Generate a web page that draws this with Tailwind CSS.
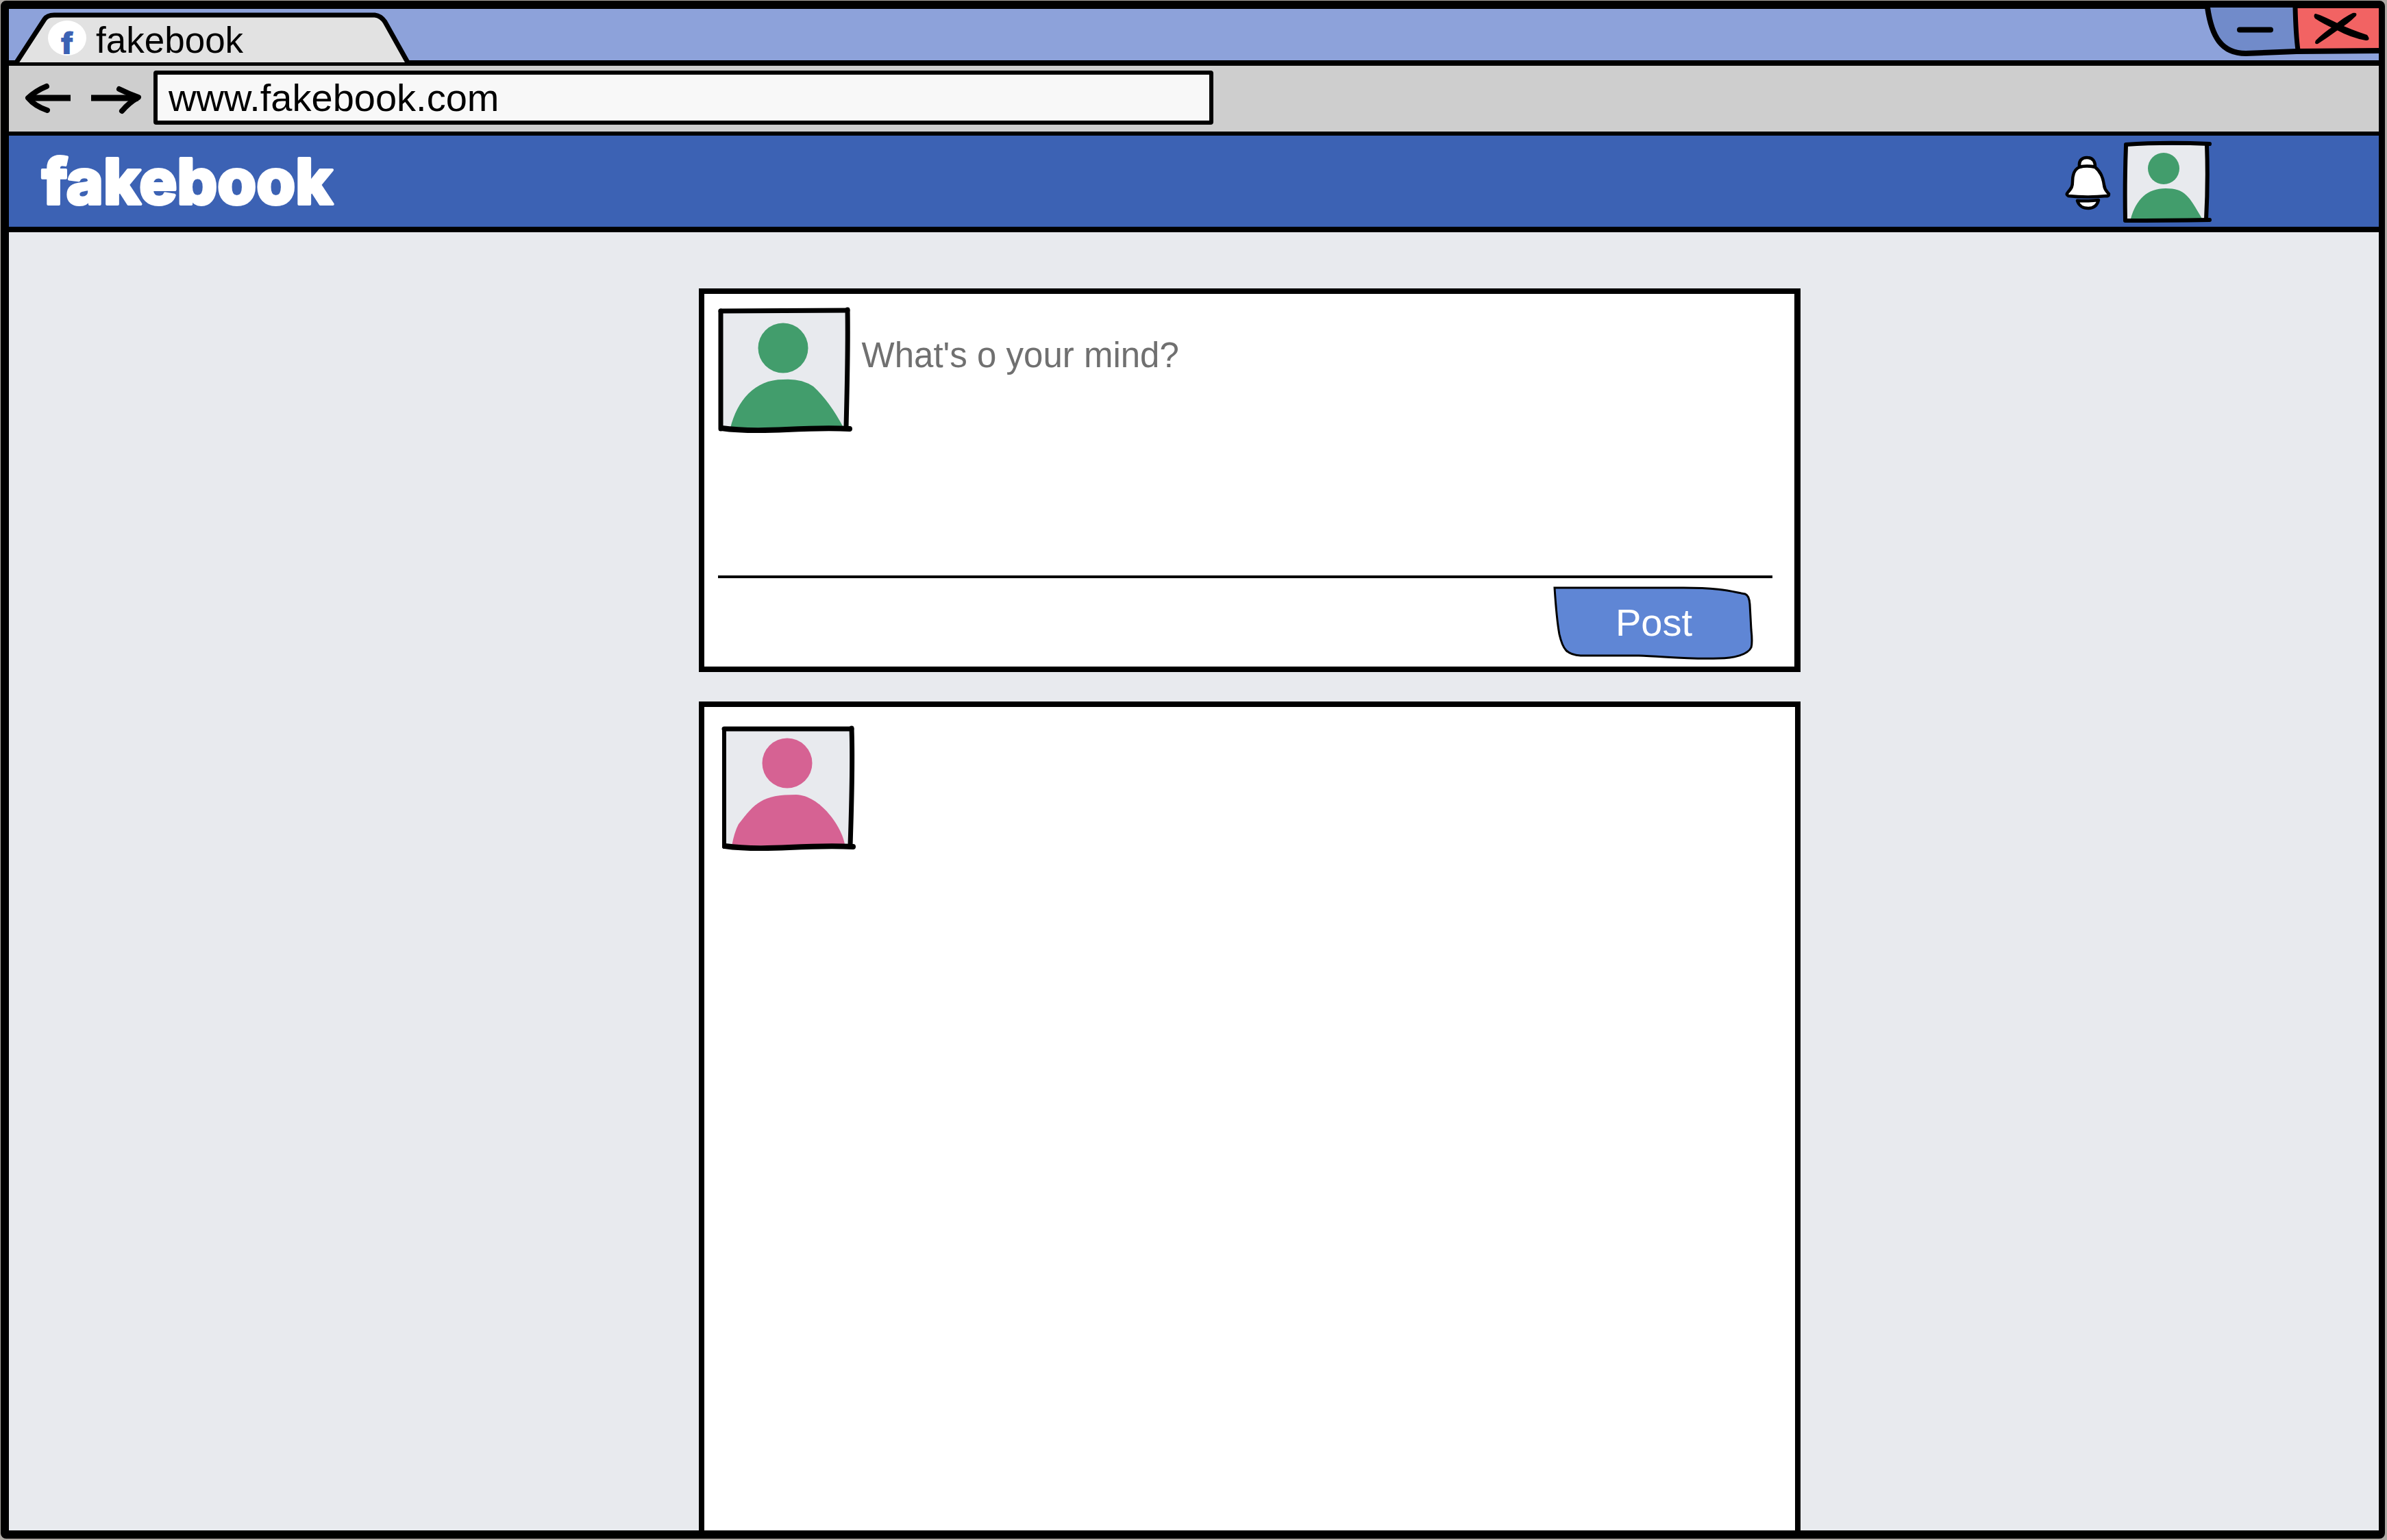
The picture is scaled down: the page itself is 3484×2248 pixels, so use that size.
<!DOCTYPE html>
<html lang="en">
<head>
<meta charset="utf-8">
<title>fakebook</title>
<script src="https://cdn.jsdelivr.net/npm/@tailwindcss/browser@4"></script>
</head>
<body class="flex min-h-screen flex-col bg-[#aca7a2] pt-px pr-[3px] pb-0.5 pl-px font-['Liberation_Sans',sans-serif] text-black">
<div class="flex flex-1 flex-col rounded-lg border-[12px] border-r-[9px] border-black bg-[#e8eaee]">

  <!-- Title bar -->
  <div class="flex h-[83px] items-start justify-between border-b-8 border-black bg-[#8da2da]">
    <div class="relative h-[76px] w-[592px]">
      <svg class="absolute inset-0 h-full w-full overflow-visible" viewBox="0 0 592 76" aria-hidden="true">
        <path d="M11 78 L52 15 Q56 9 66 9 H534 Q543 10 549 19 L582 78" fill="#e2e2e2" stroke="#000" stroke-width="7"/>
      </svg>
      <div class="relative flex h-full items-center pt-2 pl-[57px]">
        <span class="flex h-[51px] w-14 items-center justify-center rounded-[50%] bg-white pt-4 font-[Inter,sans-serif] text-[44px] leading-none font-black text-[#3c62b4]" aria-hidden="true">f</span>
        <h2 class="ml-3.5 pt-2 text-[53px] leading-[60px]">fakebook</h2>
      </div>
    </div>
    <div class="flex">
      <button class="h-[70px] w-[133px]" aria-label="Minimize">
        <svg class="block h-full w-full overflow-visible" viewBox="0 0 133 70">
          <path d="M4 -2 C10 40 24 65 60 65 L134 62 V-2 Z" fill="#718bca"/>
          <path d="M4 -2 C10 40 24 65 60 65 L134 62" fill="none" stroke="#000" stroke-width="8"/>
          <path d="M51 30.500 L96 30.500" stroke="#000" stroke-width="8" stroke-linecap="round"/>
        </svg>
      </button>
      <button class="h-[70px] w-[121px]" aria-label="Close">
        <svg class="block h-full w-full overflow-visible" viewBox="0 0 121 70">
          <path d="M-2 -1 L4 61 H121 V-1 Z" fill="#f26363"/>
          <path d="M-1 -2 Q0 38 3 60" fill="none" stroke="#000" stroke-width="7"/>
          <path d="M0 62 L121 61" stroke="#000" stroke-width="8"/>
          <path d="M28 7 Q33 7 63 22 Q80 30 104 38 Q110 46 102 46 Q80 42 60 31 Q40 22 28 14 Q25 10 28 7 Z"/>
          <path d="M83 6 Q90 5 88 10 Q76 22 61 31 Q46 42 32 51 Q26 52 29 46 Q40 35 55 25 Q70 12 83 6 Z"/>
        </svg>
      </button>
    </div>
  </div>

  <!-- Address bar -->
  <div class="flex h-[102px] items-start border-b-[6px] border-black bg-[#cecece] pt-[7px] pl-[22px]">
    <button class="mt-4 h-12 w-[70px]" aria-label="Back">
      <svg class="block h-full w-full" viewBox="0 0 70 48" fill="none" stroke="#000" stroke-linecap="round" stroke-linejoin="round">
        <path d="M6 24 H68" stroke-width="9" stroke-linecap="butt"/>
        <path d="M33 7 Q18 13 6 24 Q16 36 34 42" stroke-width="8"/>
      </svg>
    </button>
    <button class="mt-4 ml-[27px] h-12 w-[76px]" aria-label="Forward">
      <svg class="block h-full w-full" viewBox="0 0 76 48" fill="none" stroke="#000" stroke-linecap="round" stroke-linejoin="round">
        <path d="M1 24 H70" stroke-width="9" stroke-linecap="butt"/>
        <path d="M42 11 Q56 18 70 23 Q56 31 46 43" stroke-width="8"/>
      </svg>
    </button>
    <input type="text" aria-label="Address" value="www.fakebook.com" class="ml-4 h-[79px] w-[45%] rounded-sm border-[6px] border-black bg-[#f8f8f8] px-4 text-[56px] leading-[64px] outline-none">
  </div>

  <!-- Site header -->
  <header class="flex h-[141px] items-center justify-between border-b-8 border-black bg-[#3c62b4] pr-[244px] pl-[46px]">
    <h1>
      <a href="#" class="block">
        <svg class="block h-[132px] w-[460px]" viewBox="0 0 460 132">
          <text x="2" y="99" class="fill-white stroke-white stroke-[4px] font-[Inter,sans-serif] text-[92px] font-extrabold [stroke-linejoin:round]">fakebook</text>
        </svg>
      </a>
    </h1>
    <div class="flex items-center gap-3.5">
      <button class="mt-1 h-[86px] w-[74px]" aria-label="Notifications">
        <svg class="block h-full w-full" viewBox="0 0 74 86" fill="#fff" stroke="#000" stroke-width="4.500" stroke-linejoin="round">
          <path d="M25 19 C24 10 29 6 36 6 C44 6 48 11 48 19 Z"/>
          <path d="M25 20 Q36 17 48 20 C58 28 60 38 61 46 C62 54 65 55 68 59 Q68 63 65 62 Q36 65 9 62 Q5 60 8 57 C14 50 15 48 15 41 C15 30 18 23 25 20 Z"/>
          <path d="M22 69 Q38 70 53 68 C51 76 46 80 38 80 C30 80 24 76 22 69 Z"/>
        </svg>
      </button>
      <button class="h-[120px] w-[130px]" aria-label="Your profile">
        <svg class="block h-full w-full" viewBox="0 0 130 120">
          <path d="M5 7 H123 V114 H5 Z" fill="#e8eaee"/>
          <circle cx="60" cy="41" r="23" fill="#429d6c"/>
          <path d="M12 114 C20 86 36 70 63 70 C91 70 97 81 116 114 Z" fill="#429d6c"/>
          <path d="M5 8 Q3 60 4 116" fill="none" stroke="#000" stroke-width="6" stroke-linecap="round"/>
          <path d="M5 6 Q60 2 127 5" fill="none" stroke="#000" stroke-width="6" stroke-linecap="round"/>
          <path d="M123 6 Q125 60 122 115" fill="none" stroke="#000" stroke-width="6"/>
          <path d="M4 117 Q60 117 127 116" fill="none" stroke="#000" stroke-width="6" stroke-linecap="round"/>
        </svg>
      </button>
    </div>
  </header>

  <!-- Feed -->
  <main class="ml-[29.1%] flex w-[46.5%] flex-1 flex-col gap-[43px] pt-[82px]">
    <form class="flex h-[560px] flex-col border-8 border-r-9 border-black bg-white">
      <div class="mr-8 ml-5 flex flex-1 border-b-4 border-black pt-[18px]">
        <svg class="h-[188px] w-[198px] shrink-0" viewBox="0 0 198 188" role="img" aria-label="Your avatar">
          <path d="M4 6 H191 V178 H4 Z" fill="#e8eaee"/>
          <circle cx="95" cy="61" r="36.500" fill="#429d6c"/>
          <path d="M18 178 C28 138 53 107 95 107 Q121 105 139 117 Q163 139 183 177 Z" fill="#429d6c"/>
          <path d="M4 7 V179" fill="none" stroke="#000" stroke-width="7" stroke-linecap="round"/>
          <path d="M4 7 L189 6" fill="none" stroke="#000" stroke-width="7" stroke-linecap="round"/>
          <path d="M189 5 Q190 60 187 176" fill="none" stroke="#000" stroke-width="7" stroke-linecap="round"/>
          <path d="M5 178 Q40 183 100 180 T192 179" fill="none" stroke="#000" stroke-width="8" stroke-linecap="round"/>
        </svg>
        <textarea aria-label="Post text" placeholder="What's o your mind?" class="flex-1 resize-none bg-transparent pt-9 pl-3 text-[51px] leading-[72px] outline-none placeholder:text-[#707070]"></textarea>
      </div>
      <div class="flex h-[129px] justify-end pt-2.5 pr-[58px]">
        <button type="submit" class="relative h-[110px] w-[294px] text-[56px] leading-[64px] text-white">
          <svg class="absolute inset-0 h-full w-full" viewBox="0 0 294 110" aria-hidden="true">
            <path d="M2 4 H190 C245 4 262 10 280 13 Q286 15 287 28 L289 65 Q291 84 289 91 C284 102 262 107 242 107 C200 109 160 104 125 103 H40 C20 102 14 94 9 72 Q5 50 2 4 Z" fill="#5f86d5" stroke="#000" stroke-width="3"/>
          </svg>
          <span class="relative">Post</span>
        </button>
      </div>
    </form>

    <article class="flex-1 border-8 border-b-0 border-black bg-white pt-6 pl-6">
      <svg class="h-[188px] w-[200px]" viewBox="0 0 200 188" role="img" aria-label="Friend's avatar">
        <path d="M5 8 H193 V180 H5 Z" fill="#e8eaee"/>
        <circle cx="97" cy="58" r="36.500" fill="#d66293"/>
        <path d="M16 179 Q20 158 26 147 C50 116 60 104 110 104 C145 105 177 151 181 177 Z" fill="#d66293"/>
        <path d="M5 8 V180" fill="none" stroke="#000" stroke-width="6" stroke-linecap="round"/>
        <path d="M5 8 L191 8" fill="none" stroke="#000" stroke-width="7" stroke-linecap="round"/>
        <path d="M191 7 Q193 60 189 178" fill="none" stroke="#000" stroke-width="7" stroke-linecap="round"/>
        <path d="M6 179 Q40 184 100 181 T193 180" fill="none" stroke="#000" stroke-width="8" stroke-linecap="round"/>
      </svg>
    </article>
  </main>
</div>
</body>
</html>
